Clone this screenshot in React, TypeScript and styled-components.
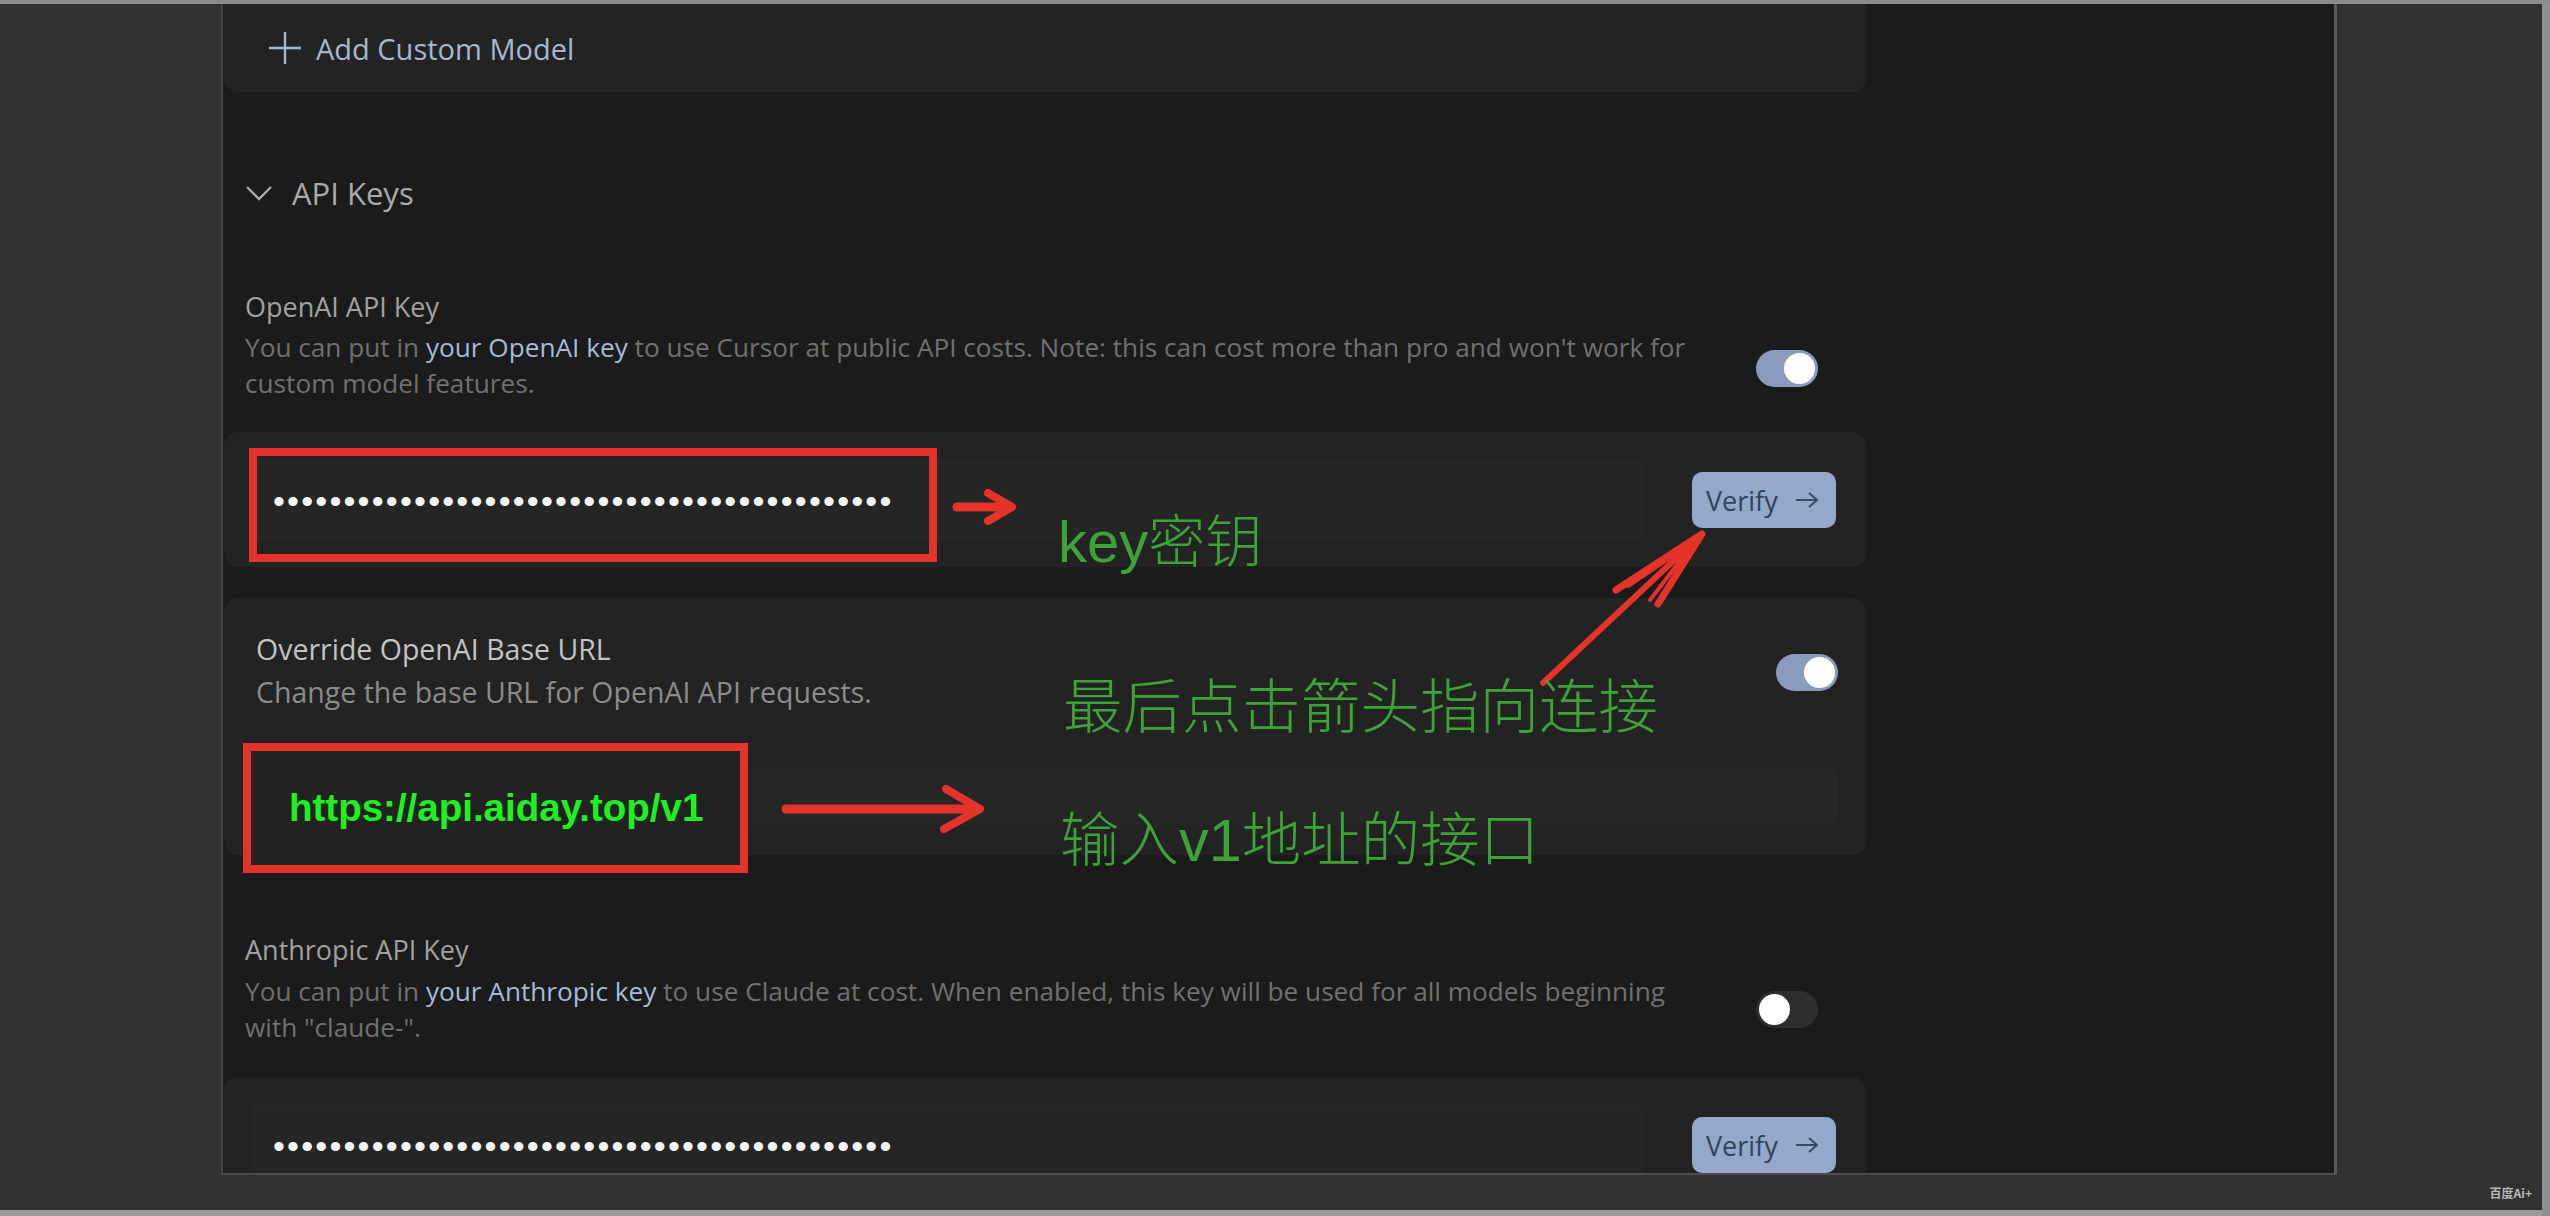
import React from "react"
import styled, { createGlobalStyle } from "styled-components"

const GlobalStyle = createGlobalStyle`
  html, body {
    margin: 0;
    padding: 0;
    background: #313131;
  }
  body {
    font-family: "Open Sans", "Noto Sans", sans-serif;
  }
`

// frame around the recorded window
const Screen = styled.div`
  position: relative;
  width: 2550px;
  height: 1216px;
  box-sizing: border-box;
  padding: 4px 0 0 221px;
  background: #313131;
  box-shadow: inset 0 4px 0 #8b8b8b, inset -8px 0 0 #8e8e8e, inset 0 -6px 0 #9a9a9a;
  overflow: hidden;
`

const Panel = styled.div`
  width: 2116px;
  height: 1171px;
  box-sizing: border-box;
  background: #1b1b1b;
  border-left: 2px solid #474747;
  border-right: 3px solid #5a5a5a;
  border-bottom: 2px solid #4d4d4d;
  overflow: hidden;
`

const Content = styled.div`
  width: 1642px;
  margin-left: 1px;
  display: flex;
  flex-direction: column;
`

const TopCard = styled.div`
  height: 88px;
  background: #232323;
  border-radius: 0 0 14px 14px;
  display: flex;
  align-items: center;
  gap: 14px;
  padding-left: 44px;
  color: #a7b6d0;
  font-size: 29px;
`

const SectionHeader = styled.div`
  margin-top: 81px;
  height: 40px;
  display: flex;
  align-items: center;
  gap: 19px;
  padding-left: 21px;
  font-size: 31px;
  color: #a9a9a9;
`

const SettingRow = styled.div<{ $top: number; $toggleGap: number }>`
  margin-top: ${({ $top }) => $top}px;
  display: flex;
  align-items: flex-end;
  justify-content: space-between;
  padding: 0 48px 0 21px;

  & > .toggle {
    margin-bottom: ${({ $toggleGap }) => $toggleGap}px;
  }
`

const TextBlock = styled.div`
  display: flex;
  flex-direction: column;
  max-width: 1458px;
`

const Label = styled.div<{ $size: number; $color: string }>`
  font-size: ${({ $size }) => $size}px;
  line-height: 30px;
  color: ${({ $color }) => $color};
  white-space: nowrap;
`

const Desc = styled.div<{ $size: number; $color: string; $gap: number }>`
  margin-top: ${({ $gap }) => $gap}px;
  font-size: ${({ $size }) => $size}px;
  line-height: 36px;
  color: ${({ $color }) => $color};

  a {
    color: #a5b9dc;
    text-decoration: none;
  }
`

const Toggle = styled.div<{ $on: boolean }>`
  width: 62px;
  height: 37px;
  box-sizing: border-box;
  padding: 3px;
  border-radius: 19px;
  display: flex;
  justify-content: ${({ $on }) => ($on ? "flex-end" : "flex-start")};
  background: ${({ $on }) => ($on ? "#8a9bbd" : "#2e2e2e")};
  flex-shrink: 0;
`

const Knob = styled.div`
  width: 31px;
  height: 31px;
  border-radius: 50%;
  background: #ffffff;
`

const KeyCard = styled.div<{ $top: number }>`
  margin-top: ${({ $top }) => $top}px;
  background: #232323;
  border-radius: 14px;
  display: flex;
  align-items: center;
  gap: 49px;
  padding: 28px 30px 27px 28px;
`

const KeyInput = styled.div`
  flex: 1;
  height: 80px;
  box-sizing: border-box;
  background: #252525;
  border: 1px solid #292929;
  border-radius: 6px;
  display: flex;
  align-items: center;
  padding-left: 20px;
`

const Dots = styled.span`
  font-family: "Liberation Sans", Arial, sans-serif;
  font-size: 34px;
  letter-spacing: 2.2px;
  color: #f4f4f4;
  line-height: 1;
  padding-top: 2px;
`

const VerifyButton = styled.div`
  width: 144px;
  height: 56px;
  box-sizing: border-box;
  border-radius: 10px;
  background: #93a8cb;
  color: #34435c;
  font-size: 27px;
  display: flex;
  align-items: center;
  justify-content: space-between;
  padding: 0 17px 0 14px;
  flex-shrink: 0;
`

const OverrideCard = styled.div`
  margin-top: 31px;
  background: #232323;
  border-radius: 14px;
  display: flex;
  flex-direction: column;
  padding: 36px 28px 30px 32px;
`

const OverrideHead = styled.div`
  display: flex;
  align-items: center;
  justify-content: space-between;
`

const UrlInput = styled.div`
  margin-top: 58px;
  height: 57px;
  background: #262626;
  border-radius: 6px;
`

// annotations drawn over the recording
const Overlay = styled.svg`
  position: absolute;
  left: 0;
  top: 0;
  pointer-events: none;
`

const RedBox = styled.div<{ $x: number; $y: number; $w: number; $h: number; $fill?: string }>`
  position: absolute;
  left: ${({ $x }) => $x}px;
  top: ${({ $y }) => $y}px;
  width: ${({ $w }) => $w}px;
  height: ${({ $h }) => $h}px;
  box-sizing: border-box;
  border: 8px solid #e4332a;
  background: ${({ $fill }) => $fill || "transparent"};
  display: flex;
  align-items: center;
  padding-left: 38px;
`

const UrlText = styled.span`
  font-family: "Liberation Sans", Arial, sans-serif;
  font-weight: 700;
  font-size: 38.5px;
  color: #1ff01f;
  white-space: nowrap;
`

const Note = styled.div<{ $x: number; $y: number; $size: number }>`
  position: absolute;
  left: ${({ $x }) => $x}px;
  top: ${({ $y }) => $y}px;
  font-family: "Liberation Sans", "Noto Sans CJK SC", sans-serif;
  font-size: ${({ $size }) => $size}px;
  font-weight: 300;
  line-height: 1;
  color: #3da336;
  white-space: nowrap;

  .cjk {
    font-family: "Noto Sans CJK SC", sans-serif;
    font-size: 57px;
  }
`

const Watermark = styled.div`
  position: absolute;
  right: 18px;
  top: 1184px;
  font-family: "Noto Sans CJK SC", sans-serif;
  font-size: 12px;
  font-weight: 700;
  color: #b9b9b9;
`

const PlusIcon = () => (
  <svg width="34" height="34" viewBox="0 0 34 34">
    <path d="M17 1v32M1 17h32" stroke="#a7b6d0" strokeWidth="2.4" fill="none" />
  </svg>
)

const ChevronIcon = () => (
  <svg width="28" height="16" viewBox="0 0 28 16">
    <path d="M2 2l12 12L26 2" stroke="#a9a9a9" strokeWidth="2.4" fill="none" />
  </svg>
)

const ArrowIcon = () => (
  <svg width="24" height="18" viewBox="0 0 24 18">
    <path d="M1 9h21M14 2l8 7-8 7" stroke="#3b4a64" strokeWidth="2" fill="none" />
  </svg>
)

const dots = "•".repeat(44)

const App = () => {
  return (
    <>
      <GlobalStyle />
      <Screen>
        <Panel>
          <Content>
            <TopCard>
              <PlusIcon />
              Add Custom Model
            </TopCard>

            <SectionHeader>
              <ChevronIcon />
              API Keys
            </SectionHeader>

            <SettingRow $top={79} $toggleGap={14}>
              <TextBlock>
                <Label $size={27} $color="#a0a0a0">OpenAI API Key</Label>
                <Desc $size={26.2} $color="#707070" $gap={7}>
                  You can put in <a>your OpenAI key</a> to use Cursor at public API costs. Note: this can cost more than pro and won't work for custom model features.
                </Desc>
              </TextBlock>
              <Toggle className="toggle" $on><Knob /></Toggle>
            </SettingRow>

            <KeyCard $top={31}>
              <KeyInput><Dots>{dots}</Dots></KeyInput>
              <VerifyButton>Verify <ArrowIcon /></VerifyButton>
            </KeyCard>

            <OverrideCard>
              <OverrideHead>
                <TextBlock>
                  <Label $size={28.5} $color="#c2c2c2">Override OpenAI Base URL</Label>
                  <Desc $size={28.5} $color="#8b8b8b" $gap={10}>Change the base URL for OpenAI API requests.</Desc>
                </TextBlock>
                <Toggle $on><Knob /></Toggle>
              </OverrideHead>
              <UrlInput />
            </OverrideCard>

            <SettingRow $top={80} $toggleGap={17}>
              <TextBlock>
                <Label $size={27} $color="#a0a0a0">Anthropic API Key</Label>
                <Desc $size={26.2} $color="#707070" $gap={8}>
                  You can put in <a>your Anthropic key</a> to use Claude at cost. When enabled, this key will be used for all models beginning with "claude-".
                </Desc>
              </TextBlock>
              <Toggle className="toggle" $on={false}><Knob /></Toggle>
            </SettingRow>

            <KeyCard $top={32}>
              <KeyInput><Dots>{dots}</Dots></KeyInput>
              <VerifyButton>Verify <ArrowIcon /></VerifyButton>
            </KeyCard>
          </Content>
        </Panel>

        <RedBox $x={249} $y={448} $w={688} $h={114} />
        <RedBox $x={243} $y={743} $w={505} $h={130} $fill="#222222">
          <UrlText>https://api.aiday.top/v1</UrlText>
        </RedBox>

        <Overlay width="2550" height="1216" viewBox="0 0 2550 1216">
          <g stroke="#e5332a" fill="none" strokeLinecap="round" strokeLinejoin="round">
            <path d="M957 507H1008" strokeWidth="9" />
            <path d="M988 493L1012 507L988 521" strokeWidth="8" />
            <path d="M786 809H976" strokeWidth="9" />
            <path d="M946 789L980 809L944 829" strokeWidth="8" />
            <path d="M1543 683L1700 536" strokeWidth="6" />
            <path d="M1616 590L1702 534L1658 604" strokeWidth="7" />
            <path d="M1628 586L1696 540L1650 600" strokeWidth="4" />
          </g>
        </Overlay>

        <Note $x={1058} $y={509} $size={58}>key<span className="cjk">密钥</span></Note>
        <Note $x={1063} $y={678} $size={59.5}>最后点击箭头指向连接</Note>
        <Note $x={1060} $y={811} $size={59.5}>输入v1地址的接口</Note>

        <Watermark>百度Ai+</Watermark>
      </Screen>
    </>
  )
}

export default App
